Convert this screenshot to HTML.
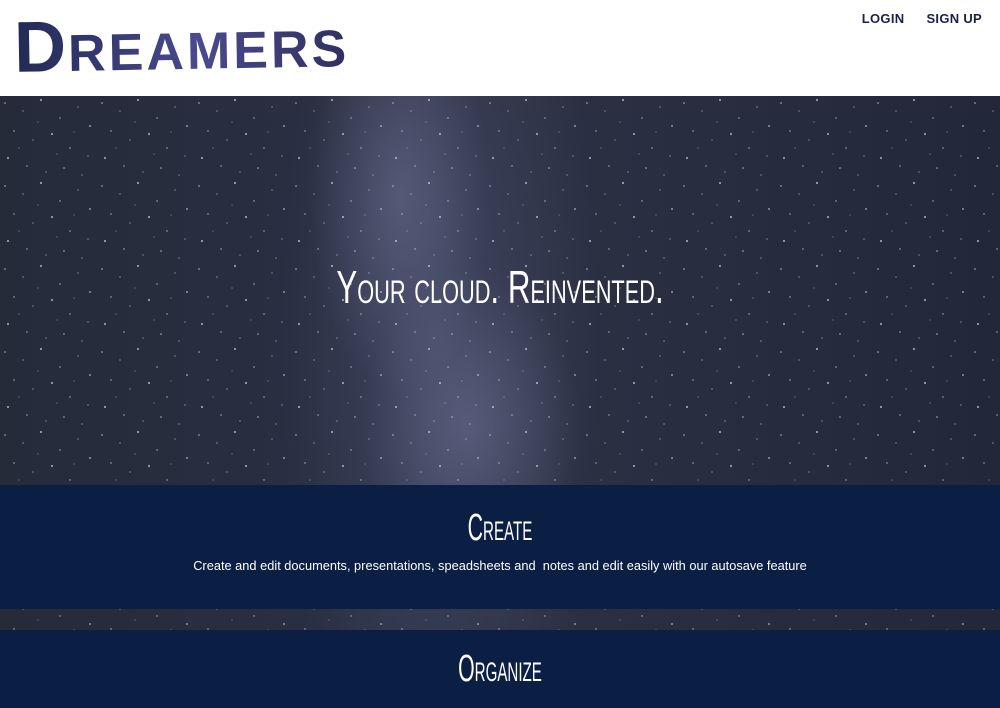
<!DOCTYPE html>
<html><head><meta charset="utf-8"><style>
*{margin:0;padding:0;box-sizing:border-box}
body{width:1000px;height:708px;overflow:hidden;background:#fff;font-family:"Liberation Sans",sans-serif;position:relative}
.hdr{height:96px;position:relative}
.logo{position:absolute;left:14px;top:4px;font-family:"Liberation Sans Narrow","Liberation Sans",sans-serif;font-size:72px;letter-spacing:2px;background:linear-gradient(90deg,#222a55,#4b4a8e 55%,#2f3060);-webkit-background-clip:text;background-clip:text;-webkit-text-fill-color:transparent;font-weight:bold;transform:rotate(-1deg)}
.logo span{font-size:52px;letter-spacing:3px}
.nav{position:absolute;top:11px;right:18px;font-size:13px;font-weight:bold;color:#1a2244;letter-spacing:.3px}
.nav b{margin-left:22px}
.sky{position:absolute;top:96px;left:0;width:1000px;height:612px;background:
radial-gradient(ellipse 90px 200px at 400px 100px,rgba(140,140,180,.35),transparent),
radial-gradient(ellipse 110px 160px at 470px 330px,rgba(140,140,180,.35),transparent),
radial-gradient(ellipse 160px 520px at 440px 250px,rgba(90,95,130,.45),transparent),
linear-gradient(90deg,#262b3a,#2a3044 40%,#2b3043 55%,#22283a)}
.sky svg{position:absolute;left:0;top:0}
.title{position:absolute;top:164px;left:0;width:1000px;text-align:center;color:#fff;font-family:"Liberation Sans Narrow","Liberation Sans",sans-serif;font-size:46px;font-variant:small-caps;transform:scaleX(.68)}
.band{position:absolute;left:0;width:1000px;background:#0b1f45;color:#fff;text-align:center}
.band h2{font-family:"Liberation Sans Narrow","Liberation Sans",sans-serif;font-weight:normal;font-variant:small-caps;font-size:38px;transform:scaleX(.56)}
.band p{font-size:13px;transform:scaleX(.985)}
</style></head><body>
<div class="hdr"><div class="logo">D<span>REAMERS</span></div>
<div class="nav"><b>LOGIN</b><b>SIGN UP</b></div></div>
<div class="sky">
<svg width="1000" height="612"><defs><pattern id="s" width="97" height="83" patternUnits="userSpaceOnUse">
<g fill="#dfe0f0" opacity=".75">
<circle cx="5" cy="7" r=".8"/><circle cx="23" cy="15" r=".6"/><circle cx="41" cy="4" r="1"/><circle cx="60" cy="22" r=".7"/><circle cx="78" cy="11" r=".6"/><circle cx="90" cy="30" r=".9"/><circle cx="14" cy="35" r=".7"/><circle cx="33" cy="44" r=".6"/><circle cx="52" cy="38" r="1"/><circle cx="70" cy="52" r=".7"/><circle cx="88" cy="60" r=".6"/><circle cx="8" cy="62" r="1"/><circle cx="27" cy="70" r=".7"/><circle cx="46" cy="76" r=".6"/><circle cx="64" cy="72" r=".8"/><circle cx="82" cy="79" r=".6"/><circle cx="19" cy="52" r=".5"/><circle cx="57" cy="58" r=".5"/><circle cx="38" cy="26" r=".5"/><circle cx="74" cy="36" r=".5"/>
</g></pattern></defs><rect width="1000" height="612" fill="url(#s)"/></svg>
<div class="title">Your cloud. Reinvented.</div>
</div>
<div class="band" style="top:485px;height:124px"><h2 style="margin-top:22px">Create</h2><p style="margin-top:8px">Create and edit documents, presentations, speadsheets and &nbsp;notes and edit easily with our autosave feature</p></div>
<div class="band" style="top:630px;height:78px"><h2 style="margin-top:18px">Organize</h2></div>
</body></html>
